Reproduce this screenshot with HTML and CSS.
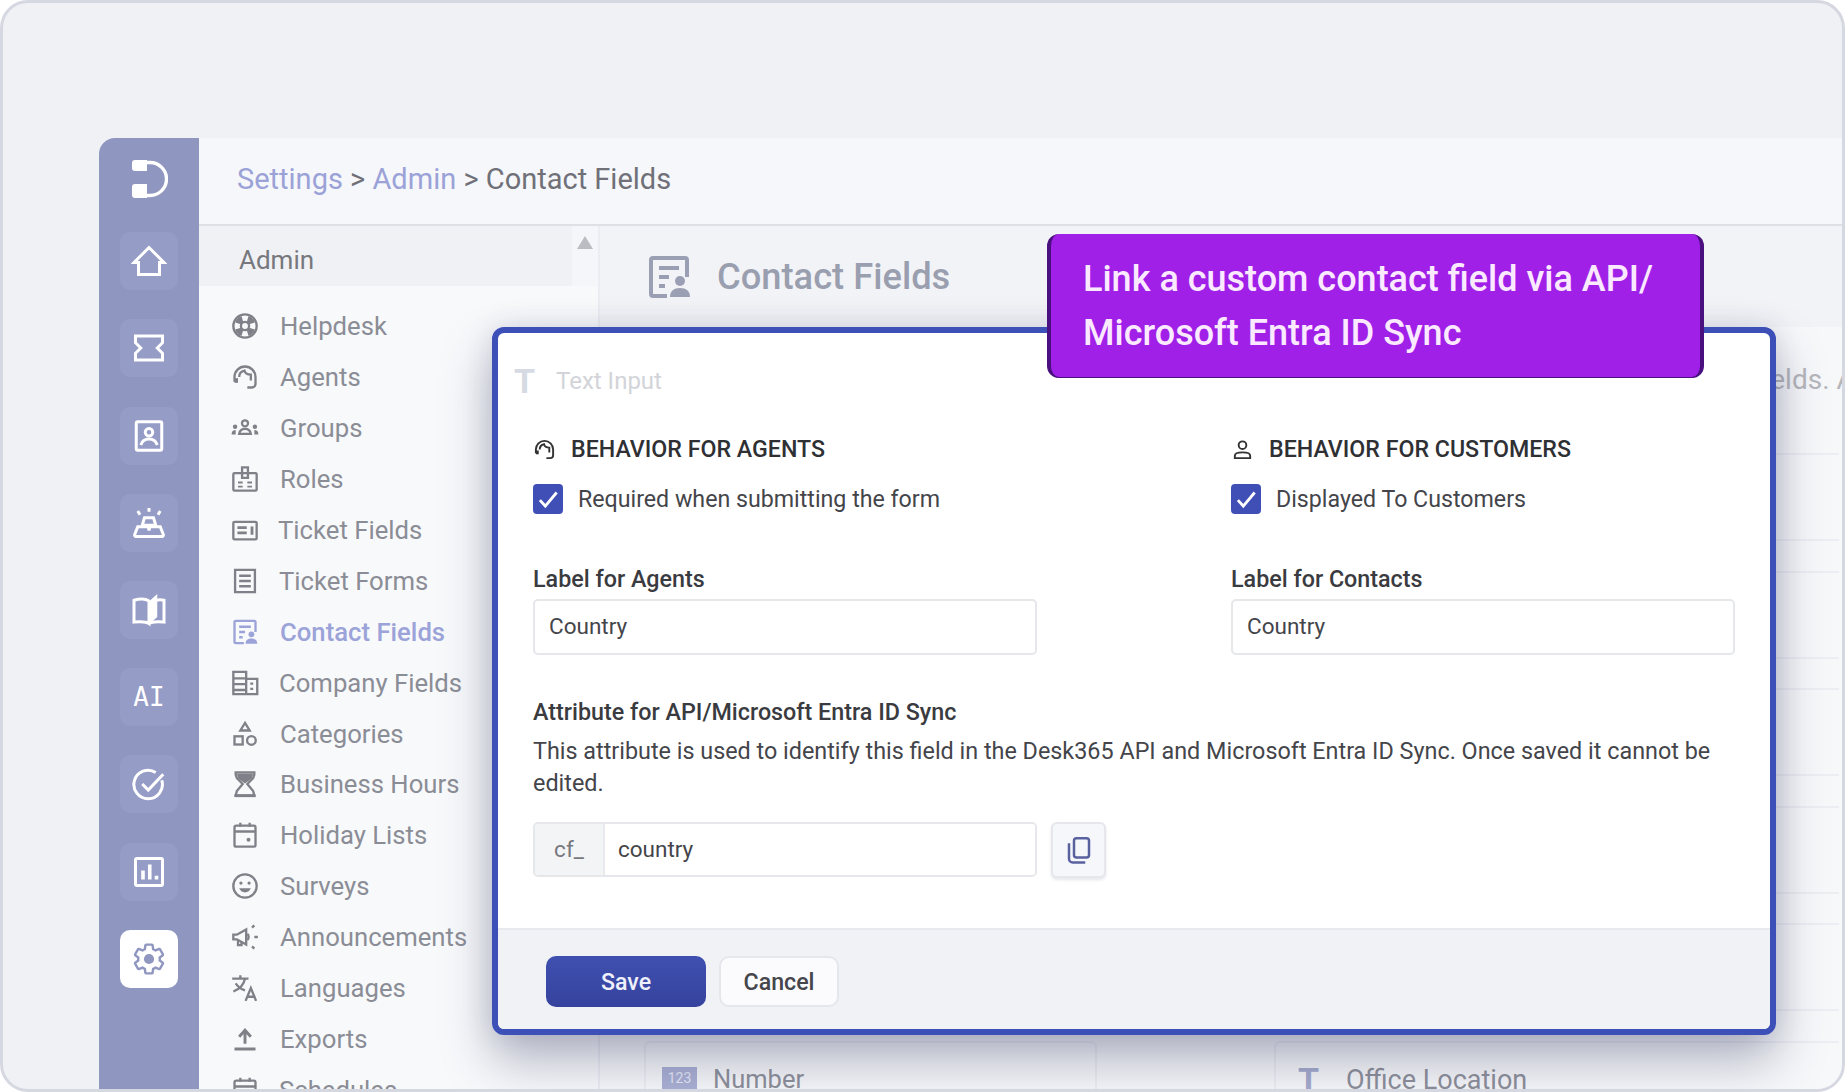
FILE: index.html
```html
<!DOCTYPE html>
<html lang="en">
<head>
  <meta charset="UTF-8" />
  <title>Contact Fields</title>
  <link rel="stylesheet" href="styles.css">
</head>
<body>
  <div class="frame">
    <div class="app">
      <nav class="rail">
        <svg class="rail-logo" viewBox="0 0 36 38"><path d="M3 2.500h15a16.500 16.500 0 0 1 0 33H3" fill="none" stroke="#fff" stroke-width="3.400"/><path d="M0 3a3 3 0 0 1 3-3h12v11H3a3 3 0 0 1-3-3zM0 27a3 3 0 0 1 3-3h12v14H3a3 3 0 0 1-3-3z" fill="#fff"/></svg>
        <a class="rail-btn"><svg viewBox="0 0 24 24"><path d="M2 13 12 3l10 10h-3v8H5v-8z"/></svg></a>
        <a class="rail-btn"><svg viewBox="0 0 24 24"><path d="M3 4h18v4.500L17.500 12l3.500 3.500V20H3v-4.500L6.500 12 3 8.500z"/></svg></a>
        <a class="rail-btn"><svg viewBox="0 0 24 24"><rect x="3.500" y="2.500" width="17" height="19" rx="1"/><circle cx="12" cy="9.500" r="2.500"/><path d="M6.500 18c1-3 3-4 5.500-4s4.500 1 5.500 4"/></svg></a>
        <a class="rail-btn"><svg viewBox="0 0 24 24"><path d="M12 2v2.500M4.500 4l1.500 2.500M19.500 4 18 6.500M9 8.500h6l1.500 5h-9zM4.500 14.500h7l.5 2.500.5-2.500h7l2 5a1 1 0 0 1-1 1.500H3.500a1 1 0 0 1-1-1.500z"/></svg></a>
        <a class="rail-btn"><svg viewBox="0 0 24 24"><path d="M12 21c-2-1.500-5-1.500-10-1V5.500C7 4 10 4.500 12 6zM12 21c2-1.500 5-1.500 10-1V5.500c-2-.5-3.500-.5-5 0"/><path d="M13 20V6l4-3.500v14z" fill="#fff" stroke-width="1"/></svg></a>
        <a class="rail-btn rail-text">AI</a>
        <a class="rail-btn"><svg viewBox="0 0 24 24"><path d="M20.500 9.500a9.500 9.500 0 1 1-4-5.200"/><path d="m7.500 12 4 4 10-10.500"/></svg></a>
        <a class="rail-btn"><svg viewBox="0 0 24 24"><rect x="3" y="3" width="18" height="18" rx="1"/><path d="M8 17v-6M12.500 17V7M17 17v-2.500" stroke-width="2.400"/></svg></a>
        <a class="rail-btn rail-active"><svg viewBox="0 0 24 24"><path d="M19.140 12.940c.04-.3.06-.61.06-.94 0-.32-.02-.64-.07-.94l2.030-1.580a.49.49 0 0 0 .12-.61l-1.920-3.320a.488.488 0 0 0-.59-.22l-2.390.96c-.5-.38-1.030-.7-1.620-.94l-.36-2.540a.484.484 0 0 0-.48-.41h-3.840c-.24 0-.43.17-.47.41l-.36 2.540c-.59.24-1.130.57-1.620.94l-2.390-.96c-.22-.08-.47 0-.59.22L2.740 8.870c-.12.21-.08.47.12.61l2.030 1.580c-.05.3-.09.63-.09.94s.02.64.07.94l-2.030 1.580a.49.49 0 0 0-.12.61l1.920 3.320c.12.22.37.29.59.22l2.390-.96c.5.38 1.030.7 1.620.94l.36 2.540c.05.24.24.41.48.41h3.840c.24 0 .44-.17.47-.41l.36-2.540c.59-.24 1.130-.56 1.620-.94l2.390.96c.22.08.47 0 .59-.22l1.920-3.320c.12-.22.07-.47-.12-.61z"/><circle cx="12" cy="12" r="3.400" class="gear-dot"/></svg></a>
      </nav>

      <div class="main">
        <header class="topbar">
          <a class="crumb">Settings</a> &gt; <a class="crumb">Admin</a> &gt; Contact Fields
        </header>

        <div class="body">
          <aside class="sidebar">
            <div class="sidebar-head">
              <div class="sidebar-title">Admin</div>
              <div class="scroll-up"></div>
            </div>
            <ul class="side-list">
              <li><svg viewBox="0 0 24 24"><circle cx="12" cy="12" r="10"/><circle cx="12" cy="12" r="3.500"/><path d="M3.500 9a9 9 0 0 1 5.500-5.500l1.500 5-2 2zM20.500 9A9 9 0 0 0 15 3.500l-1.500 5 2 2zM3.500 15A9 9 0 0 0 9 20.500l1.500-5-2-2zM20.500 15a9 9 0 0 1-5.500 5.500l-1.500-5 2-2z" class="solid"/></svg>Helpdesk</li>
              <li><svg viewBox="0 0 24 24"><path d="M3 16v-4a9 9 0 0 1 18 0v6a3 3 0 0 1-3 3h-4"/><path d="M7 12c0-3 2-5 4.500-5.500C12 8.500 14 10 17 10v5"/><path d="M3 13h3v4H3z" class="solid"/></svg>Agents</li>
              <li><svg viewBox="0 0 24 24"><circle cx="12" cy="8" r="2.600"/><path d="M7 17c.5-3 2.500-4.300 5-4.300s4.500 1.300 5 4.300z"/><circle cx="3.500" cy="11" r="1.900" class="solid"/><circle cx="20.500" cy="11" r="1.900" class="solid"/><path d="M.5 17.500c0-2.500 1.300-3.800 3.500-3.800v3.800zM23.500 17.500c0-2.500-1.300-3.800-3.500-3.800v3.800z" class="solid"/></svg>Groups</li>
              <li><svg viewBox="0 0 24 24"><rect x="2" y="7" width="20" height="15" rx="1"/><path d="M9.500 11V2h5v9z"/><path d="M6 15h4M14 15h4M6 18.500h4M14 18.500h4" stroke-width="1.600"/></svg>Roles</li>
              <li class="nudge-2"><svg viewBox="0 0 24 24"><rect x="2" y="5" width="20" height="15" rx="1"/><path d="M5.500 10h8M5.500 14.500h8M18 9v7" stroke-width="2.400"/></svg>Ticket Fields</li>
              <li class="nudge-1"><svg viewBox="0 0 24 24"><path d="M3.500 2.500h17v19h-17z"/><path d="M7 7.500h10M7 12h10M7 16.500h10"/></svg>Ticket Forms</li>
              <li class="side-active"><svg viewBox="0 0 24 24"><path d="M21 12V3.500a1 1 0 0 0-1-1H4a1 1 0 0 0-1 1v17a1 1 0 0 0 1 1h7"/><path d="M7 7.500h10M7 12h5M7 16.500h3"/><circle cx="17.500" cy="14" r="2.500" class="solid"/><path d="M12.500 22c0-3 2-4.500 5-4.500s5 1.500 5 4.500z" class="solid"/></svg>Contact Fields</li>
              <li class="nudge-1"><svg viewBox="0 0 24 24"><path d="M2 2.500h11v19H2zM13 8.500h9.500v13H13zM2 8h11M2 13h11M2 18h11"/><path d="M16.500 12.500h2.500M16.500 17h2.500"/></svg>Company Fields</li>
              <li><svg viewBox="0 0 24 24"><path d="M12 2.500 16 9H8z"/><rect x="3" y="14" width="7" height="7"/><circle cx="17.500" cy="17.500" r="3.700"/></svg>Categories</li>
              <li><svg viewBox="0 0 24 24"><path d="M4 2h16v2l-1 3-5 5 5 6 1 4H4l1-4 5-6-5-5-1-3z"/><path d="M5 3h14l-1 4-6 4.500L6 7z" class="solid"/><path d="M3 22h18" stroke-width="2.500"/></svg>Business Hours</li>
              <li><svg viewBox="0 0 24 24"><rect x="3" y="4" width="18" height="18" rx="1.500"/><path d="M3 9h18M8 1.500V5M16 1.500V5"/><circle cx="15" cy="16" r="1.700" class="solid"/></svg>Holiday Lists</li>
              <li><svg viewBox="0 0 24 24"><circle cx="12" cy="12" r="10"/><circle cx="8.500" cy="9.500" r="1.400" class="solid"/><circle cx="15.500" cy="9.500" r="1.400" class="solid"/><path d="M7 14c1 2.500 3 3.500 5 3.500s4-1 5-3.500z" class="solid"/></svg>Surveys</li>
              <li><svg viewBox="0 0 24 24"><path d="M2 10v4h3l8 4.500V5.500L5 10z"/><path d="M6 14.500V19h3v-3"/><path d="M14 9.500c1.500 1 1.500 4 0 5"/><path d="M18 4l2-2M18 20l2 2M20 12h3"/></svg>Announcements</li>
              <li><svg viewBox="0 0 24 24"><path d="M1 4h14M8 1v3M12 4c-1 5-5 9-10 11M4 8c2 3 5 5 8 6"/><path d="m12.500 23 4.500-11 4.500 11M14 19.500h7"/></svg>Languages</li>
              <li><svg viewBox="0 0 24 24"><path d="M3 20.500h18M12 16V5M7 10l5-5.500 5 5.500" stroke-width="2.500"/></svg>Exports</li>
              <li class="nudge-1"><svg viewBox="0 0 24 24"><rect x="3" y="4" width="18" height="18" rx="1.500"/><path d="M3 9h18M8 1.500V5M16 1.500V5"/></svg>Schedules</li>
            </ul>
          </aside>

          <section class="content">
            <div class="content-head">
              <svg viewBox="0 0 24 24"><path d="M21 12V3.500a1 1 0 0 0-1-1H4a1 1 0 0 0-1 1v17a1 1 0 0 0 1 1h7"/><path d="M7 7.500h10M7 12h5M7 16.500h3"/><circle cx="17.500" cy="14" r="2.500" class="solid"/><path d="M12.500 22c0-3 2-4.500 5-4.500s5 1.500 5 4.500z" class="solid"/></svg>
              <h1>Contact Fields</h1>
            </div>
            <p class="content-note">Add and manage the custom contact fields. Add</p>
            <div class="card-grid">
              <div class="field-card"></div><div class="field-card card-open"></div>
              <div class="field-card"></div><div class="field-card card-open"></div>
              <div class="field-card"></div><div class="field-card card-open"></div>
              <div class="field-card"></div><div class="field-card card-open"></div>
              <div class="field-card"></div><div class="field-card card-open"></div>
              <div class="field-card"><span class="num-badge">123</span>Number</div>
              <div class="field-card card-open card-right"><span class="t-glyph">T</span>Office Location</div>
            </div>
          </section>
        </div>
      </div>
    </div>

    <div class="modal">
      <div class="callout">Link a custom contact field via API/<br>Microsoft Entra ID Sync</div>

      <div class="modal-body">
        <div class="field-type"><span class="t-glyph">T</span>Text Input</div>

        <div class="two-col">
          <div>
            <h3 class="behave-title"><svg viewBox="0 0 24 24"><path d="M3 16v-4a9 9 0 0 1 18 0v6a3 3 0 0 1-3 3h-4"/><path d="M7 12c0-3 2-5 4.500-5.500C12 8.500 14 10 17 10v5"/><path d="M3 13h3v4H3z" class="solid"/></svg>BEHAVIOR FOR AGENTS</h3>
            <div class="check-row"><span class="check"><svg viewBox="0 0 24 24"><path d="m4.500 13 5 5.500L20 6"/></svg></span>Required when submitting the form</div>
          </div>
          <div>
            <h3 class="behave-title"><svg viewBox="0 0 24 24"><circle cx="12" cy="7.500" r="4"/><path d="M4 21v-2.500c0-2 2-3.500 8-3.500s8 1.500 8 3.500V21z"/></svg>BEHAVIOR FOR CUSTOMERS</h3>
            <div class="check-row"><span class="check"><svg viewBox="0 0 24 24"><path d="m4.500 13 5 5.500L20 6"/></svg></span>Displayed To Customers</div>
          </div>
        </div>

        <div class="two-col labels">
          <div>
            <div class="field-label">Label for Agents</div>
            <input class="text-input" value="Country">
          </div>
          <div>
            <div class="field-label">Label for Contacts</div>
            <input class="text-input" value="Country">
          </div>
        </div>

        <div class="field-label attr-label">Attribute for API/Microsoft Entra ID Sync</div>
        <p class="attr-desc">This attribute is used to identify this field in the Desk365 API and Microsoft Entra ID Sync. Once saved it cannot be edited.</p>

        <div class="attr-row">
          <div class="attr-input">
            <span class="attr-prefix">cf_</span>
            <input class="attr-value" value="country">
          </div>
          <button class="copy-btn"><svg viewBox="0 0 24 24"><rect x="8" y="2.500" width="12" height="15.500" rx="2"/><path d="M4 6.500V19a3 3 0 0 0 3 3h10"/></svg></button>
        </div>
      </div>

      <div class="modal-foot">
        <button class="btn-save">Save</button>
        <button class="btn-cancel">Cancel</button>
      </div>
    </div>
  </div>
</body>
</html>
```

FILE: styles.css
```css
* {
  box-sizing: border-box;
}

body {
  margin: 0;
  font-family: Roboto, "Liberation Sans", sans-serif;
  background: #fff;
}

svg {
  fill: none;
  stroke: currentColor;
  stroke-width: 2;
  flex: none;
}

svg .solid {
  fill: currentColor;
  stroke: none;
}

.frame {
  position: relative;
  width: 1845px;
  height: 1092px;
  padding: 135px 0 0 96px;
  background: #f0f1f5;
  border: 3px solid #d5d8e0;
  border-radius: 28px;
  overflow: hidden;
}

.app {
  display: flex;
  height: 100%;
}

/* left rail */
.rail {
  width: 100px;
  flex: none;
  display: flex;
  flex-direction: column;
  align-items: center;
  gap: 29.2px;
  padding-top: 22px;
  background: #8f96c0;
  border-top-left-radius: 16px;
}

.rail-logo {
  width: 36px;
  height: 38px;
  margin: 0 0 5px 2px;
  stroke: none;
}

.rail-btn {
  width: 58px;
  height: 58px;
  display: flex;
  align-items: center;
  justify-content: center;
  background: #959cc6;
  border-radius: 10px;
  color: #fff;
}

.rail-btn svg {
  width: 36px;
  height: 36px;
}

.rail-text {
  font-family: "DejaVu Sans Mono", monospace;
  font-size: 26px;
  font-weight: 400;
}

.rail-active {
  background: #fff;
  color: #8f96c0;
}

.rail-active svg {
  stroke-width: 1.600;
}

.rail-active .gear-dot {
  fill: #8f96c0;
  stroke: none;
}

/* top bar */
.main {
  flex: 1;
  min-width: 0;
  display: flex;
  flex-direction: column;
}

.topbar {
  height: 88px;
  flex: none;
  padding: 23px 0 0 38px;
  background: #f6f7fa;
  border-bottom: 2px solid #dfe0e6;
  font-size: 29px;
  line-height: 36px;
  color: #6f7078;
}

.crumb {
  color: #9ba2d8;
}

.body {
  flex: 1;
  min-height: 0;
  display: flex;
}

/* admin sidebar */
.sidebar {
  width: 401px;
  flex: none;
  background: #f8f9fb;
  border-right: 2px solid #ecedf2;
  overflow: hidden;
}

.sidebar-head {
  display: flex;
  height: 60px;
  background: #f5f6f9;
}

.sidebar-title {
  width: 373px;
  padding: 4px 0 0 40px;
  background: #f0f1f4;
  font-size: 26px;
  line-height: 60px;
  color: #77787e;
}

.scroll-up {
  width: 0;
  height: 0;
  margin: 10px 0 0 5px;
  border-left: 8px solid transparent;
  border-right: 8px solid transparent;
  border-bottom: 13px solid #bcbdc3;
}

.side-list {
  list-style: none;
  margin: 0;
  padding: 15px 0 0 31px;
}

.side-list li {
  height: 50.900px;
  display: flex;
  align-items: center;
  gap: 20px;
  font-size: 25.700px;
  color: #8b8d96;
  white-space: nowrap;
}

.side-list svg {
  width: 30px;
  height: 28px;
  color: #808188;
}

.side-list .nudge-2 {
  gap: 18px;
}

.side-list .nudge-1 {
  gap: 19px;
}

.side-list .side-active {
  color: #9ba3d9;
  font-weight: 500;
}

.side-active svg {
  color: #9ba3d9;
}

/* page behind the dialog */
.content {
  flex: 1;
  min-width: 0;
  overflow: hidden;
  background: #f7f8fa;
}

.content-head {
  height: 101px;
  display: flex;
  align-items: center;
  gap: 24px;
  padding: 0 0 0 45px;
  background: #f2f3f7;
  color: #9a9fb4;
}

.content-head svg {
  width: 48px;
  height: 48px;
  stroke-width: 2;
}

.content-head h1 {
  margin: 0;
  font-size: 36.300px;
  font-weight: 500;
  color: #9a9fb0;
}

.content-note {
  height: 126px;
  margin: 0;
  padding: 35px 0 0 688px;
  font-size: 28px;
  line-height: 36px;
  color: #b5b6bb;
  white-space: nowrap;
}

.card-grid {
  display: grid;
  grid-template-columns: 453px 565px;
  column-gap: 177px;
  row-gap: 29.600px;
  padding-left: 44px;
}

.field-card {
  height: 88px;
  display: flex;
  align-items: center;
  border: 2px solid #eceef3;
  border-radius: 6px;
  padding: 0 0 12px 16px;
  font-size: 25.500px;
  color: #8d8f99;
}

.card-open {
  border-right: 0;
  border-radius: 6px 0 0 6px;
}

.num-badge {
  width: 35px;
  height: 23px;
  margin: 0 16px 0 0;
  background: #aab0d4;
  color: #e6e8f4;
  font-size: 14px;
  line-height: 23px;
  text-align: center;
}

.card-right {
  padding: 0 0 9px 22px;
  font-size: 27px;
}

.card-right .t-glyph {
  color: #a5abcd;
  margin-right: 22px;
}

.t-glyph {
  font-size: 34px;
  font-weight: 700;
  width: 26px;
}

/* dialog */
.modal {
  position: absolute;
  top: 324px;
  left: 489px;
  width: 1284px;
  height: 708px;
  display: flex;
  flex-direction: column;
  background: #fff;
  border: 6px solid #3d50b8;
  border-radius: 12px;
  box-shadow: 0 26px 50px rgba(55, 60, 100, 0.36), 0 0 28px rgba(55, 60, 100, 0.14);
}

.callout {
  position: absolute;
  top: -99px;
  left: 549px;
  width: 657px;
  height: 144px;
  padding: 18px 0 0 32px;
  background: #a020e8;
  border: solid #4a1080;
  border-width: 0 4px 1px;
  border-radius: 12px;
  font-size: 36px;
  font-weight: 500;
  line-height: 54px;
  color: #fbeaff;
}

.modal-body {
  flex: 1;
  padding: 33px 35px 0;
}

.field-type {
  display: flex;
  align-items: center;
  height: 30px;
  margin-left: -19px;
  gap: 16px;
  font-size: 24px;
  color: #d2d4d9;
}

.field-type .t-glyph {
  color: #d6dae3;
}

.two-col {
  display: grid;
  grid-template-columns: 504px 504px;
  column-gap: 194px;
}

.behave-title {
  display: flex;
  align-items: center;
  gap: 15px;
  height: 28px;
  margin: 39px 0 21px;
  font-size: 23.200px;
  font-weight: 500;
  color: #2f3034;
}

.behave-title svg {
  width: 23px;
  height: 23px;
  color: #333;
}

.check-row {
  display: flex;
  align-items: center;
  gap: 15px;
  height: 30px;
  font-size: 23.200px;
  color: #44454a;
}

.check {
  width: 30px;
  height: 30px;
  display: flex;
  align-items: center;
  justify-content: center;
  background: #3f4fb5;
  border-radius: 4px;
  color: #fff;
}

.check svg {
  width: 26px;
  height: 26px;
  stroke-width: 2.600;
}

.labels {
  margin-top: 51px;
}

.field-label {
  height: 28px;
  margin-bottom: 6px;
  font-size: 23.300px;
  font-weight: 500;
  line-height: 28px;
  color: #3a3b40;
}

.text-input {
  display: block;
  width: 100%;
  height: 56px;
  padding: 0 14px 2px;
  background: #fff;
  border: 2px solid #e6e7ea;
  border-radius: 5px;
  font: 22.500px Roboto, sans-serif;
  color: #44454a;
}

.attr-label {
  margin: 43px 0 9px;
}

.attr-desc {
  margin: 0 0 23px;
  font-size: 23.370px;
  line-height: 32px;
  color: #44454a;
}

.attr-row {
  display: flex;
  gap: 14px;
}

.attr-input {
  width: 504px;
  height: 55px;
  display: flex;
  border: 2px solid #e6e7ea;
  border-radius: 5px;
  overflow: hidden;
}

.attr-prefix {
  width: 70px;
  background: #f3f4f5;
  border-right: 2px solid #e8e9ec;
  font-size: 22.500px;
  line-height: 50px;
  text-align: center;
  color: #77787e;
}

.attr-value {
  flex: 1;
  min-width: 0;
  border: 0;
  padding: 0 13px 2px;
  font: 22.500px Roboto, sans-serif;
  color: #44454a;
}

.copy-btn {
  width: 55px;
  height: 56px;
  display: flex;
  align-items: center;
  justify-content: center;
  padding: 0;
  background: #f6f7fb;
  border: 2px solid #e6e7ec;
  border-radius: 6px;
  box-shadow: 0 2px 3px rgba(60, 60, 90, 0.12);
  color: #59619f;
}

.copy-btn svg {
  width: 30px;
  height: 30px;
}

.modal-foot {
  height: 101px;
  flex: none;
  display: flex;
  align-items: flex-start;
  gap: 13px;
  padding: 26px 0 0 48px;
  background: #f0f2f6;
  border-top: 2px solid #e8e9ee;
  border-radius: 0 0 6px 6px;
}

.btn-save,
.btn-cancel {
  height: 51px;
  border-radius: 10px;
  font: 500 23.200px Roboto, sans-serif;
}

.btn-save {
  width: 160px;
  background: linear-gradient(#3f50b0, #36439e);
  border: 0;
  color: #eef0fb;
}

.btn-cancel {
  width: 120px;
  background: #fbfbfd;
  border: 2px solid #e6e7ec;
  color: #45464c;
}
```
